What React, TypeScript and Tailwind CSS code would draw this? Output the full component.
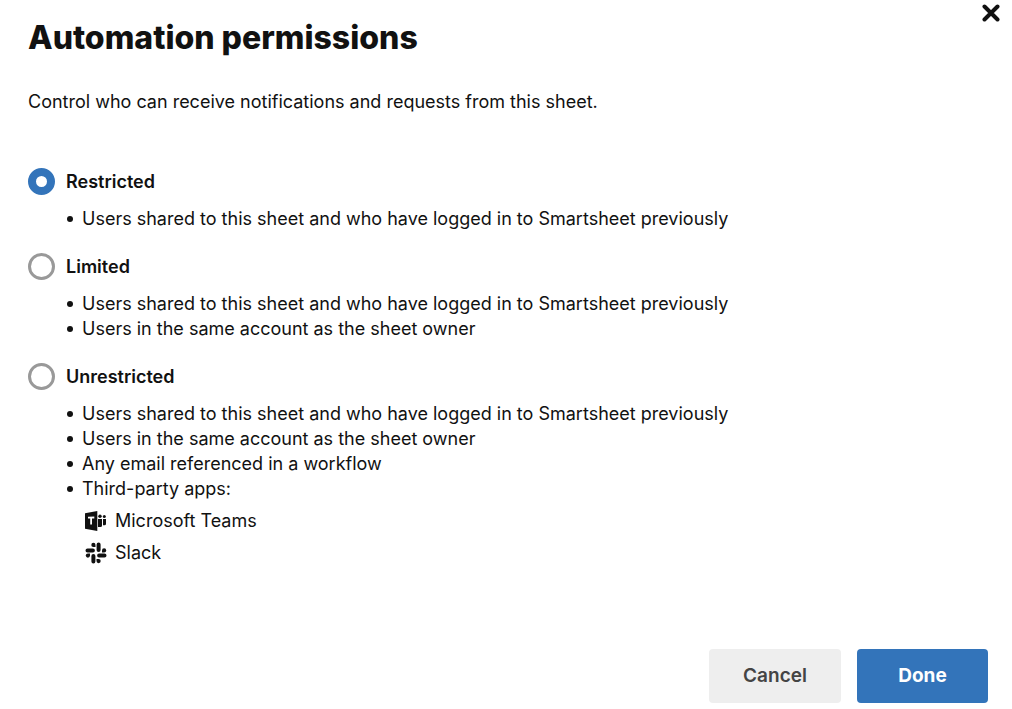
import { useState } from 'react';

interface PermissionOption {
  id: string;
  label: string;
  items: string[];
}

const OPTIONS: PermissionOption[] = [
  {
    id: 'restricted',
    label: 'Restricted',
    items: ['Users shared to this sheet and who have logged in to Smartsheet previously'],
  },
  {
    id: 'limited',
    label: 'Limited',
    items: [
      'Users shared to this sheet and who have logged in to Smartsheet previously',
      'Users in the same account as the sheet owner',
    ],
  },
  {
    id: 'unrestricted',
    label: 'Unrestricted',
    items: [
      'Users shared to this sheet and who have logged in to Smartsheet previously',
      'Users in the same account as the sheet owner',
      'Any email referenced in a workflow',
      'Third-party apps:',
    ],
  },
];

function CloseIcon() {
  return (
    <svg viewBox="0 0 18 18" className="h-[18px] w-[18px]" fill="none" stroke="currentColor" strokeWidth="4" strokeLinecap="round" aria-hidden="true">
      <path d="M2.500 2.500l13 13M15.500 2.500l-13 13" />
    </svg>
  );
}

function TeamsIcon() {
  return (
    <svg viewBox="0 0 22 20" className="h-5 w-[22px]" fill="currentColor" aria-hidden="true">
      <path fillRule="evenodd" d="M0 2.200L12.300 0v20L0 17.800zM3 5.800v1.700h2.200V13.500H7V7.500h2.300V5.600z" />
      <circle cx="15" cy="5.200" r="1.700" />
      <circle cx="19.300" cy="5.600" r="1.500" />
      <path d="M13 8h4v6.500a1.500 1.500 0 0 1-1.500 1.500H13zM18 8h3v4.700a1.500 1.500 0 0 1-1.500 1.500H18z" />
    </svg>
  );
}

function SlackIcon() {
  return (
    <svg viewBox="0 0 22 22" className="h-[22px] w-[22px]" fill="none" stroke="currentColor" strokeWidth="4" strokeLinecap="round" aria-hidden="true">
      <path d="M13.600 2.500v5.400M19.500 13.600h-5.400M8.400 19.500v-5.400M2.500 8.400h5.400" />
      <g fill="currentColor" stroke="none">
        <path d="M8.400.8a2.100 2.100 0 0 0 0 4.200h2.100V2.900A2.100 2.100 0 0 0 8.400.8z" />
        <path d="M21.200 8.400a2.100 2.100 0 0 0-4.200 0v2.100h2.100a2.100 2.100 0 0 0 2.100-2.100z" />
        <path d="M13.600 21.200a2.100 2.100 0 0 0 0-4.200h-2.100v2.100a2.100 2.100 0 0 0 2.100 2.100z" />
        <path d="M.8 13.600a2.100 2.100 0 0 0 4.200 0v-2.100H2.900A2.100 2.100 0 0 0 .8 13.600z" />
      </g>
    </svg>
  );
}

export default function App() {
  const [selected, setSelected] = useState('restricted');

  return (
    <main
      role="dialog"
      aria-labelledby="dialog-title"
      className="bg-white pr-6 pb-1.5 pl-7 font-['Inter',sans-serif] text-lg text-[#111]"
    >
      <header className="flex items-start justify-between">
        <h1 id="dialog-title" className="pt-4 text-[32px] leading-[44px] font-extrabold">
          Automation permissions
        </h1>
        <button type="button" aria-label="Close" className="-mr-4 p-1">
          <CloseIcon />
        </button>
      </header>

      <p className="mt-[30px] leading-6">Control who can receive notifications and requests from this sheet.</p>

      <form className="mt-[54px] space-y-[22px]">
        {OPTIONS.map(option => (
          <div key={option.id}>
            <label className="flex items-center gap-[11px] font-semibold leading-[27px]">
              <input
                type="radio"
                name="permission"
                value={option.id}
                checked={selected === option.id}
                onChange={() => setSelected(option.id)}
                className="h-[27px] w-[27px] appearance-none rounded-full border-[3px] border-[#999] bg-white checked:border-8 checked:border-[#3374ba]"
              />
              {option.label}
            </label>
            <ul className="mt-[11px] ml-[39px]">
              {option.items.map(item => (
                <li key={item} className="flex items-center gap-[9px] leading-[25px]">
                  <span className="h-1.5 w-1.5 rounded-full bg-[#111]" />
                  {item}
                </li>
              ))}
            </ul>
          </div>
        ))}
      </form>

      <ul className="mt-1 ml-[57px]">
        <li className="flex h-8 items-center gap-2">
          <TeamsIcon />
          Microsoft Teams
        </li>
        <li className="flex h-8 items-center gap-2">
          <SlackIcon />
          Slack
        </li>
      </ul>

      <footer className="mt-20 flex justify-end gap-4 text-[19px]">
        <button type="button" className="h-[54px] w-[132px] rounded bg-[#eee] font-semibold text-[#444]">
          Cancel
        </button>
        <button type="button" className="h-[54px] w-[131px] rounded bg-[#3374ba] font-bold text-white">
          Done
        </button>
      </footer>
    </main>
  );
}
